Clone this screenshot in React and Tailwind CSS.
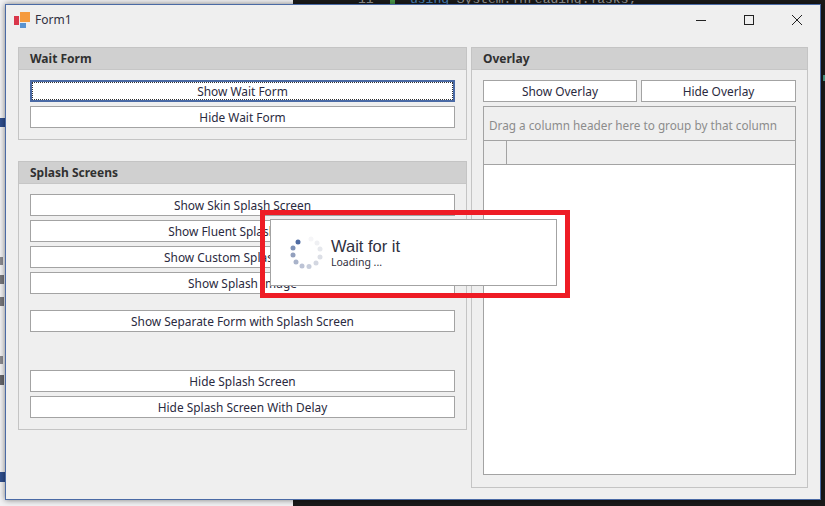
import React from "react";

const font = "font-['Noto_Sans','Liberation_Sans',sans-serif]";

const Btn = ({ label, focused, className = "" }) => (
  <div
    className={`flex h-[22px] items-center justify-center border bg-white pt-px text-[11.9px] text-[#2a2a40] ${
      focused ? "border-2 border-[#4a6aa5] outline-1 -outline-offset-3 outline-dotted outline-[#333]" : "border-[#a3a3a3]"
    } ${className}`}
  >
    {label}
  </div>
);

const GroupHead = ({ title }) => (
  <div className="flex h-[22px] items-center border-b border-[#c6c6c6] bg-[#d0d0d0] pl-[11px] pt-px text-[12px] font-bold text-[#303030]">
    {title}
  </div>
);

const Spinner = () => {
  const dots = [
    [298, 242, "#4f6ca3"],
    [293, 248, "#7e92b8"],
    [293, 255, "#929fbd"],
    [296, 262, "#a9b3ca"],
    [302, 266, "#bcc3d5"],
    [309, 266.5, "#c7cddb"],
    [316, 263, "#d3d7e1"],
    [320, 257, "#dcdfe6"],
    [320, 249, "#e6e8ed"],
    [317, 243, "#eff0f3"],
    [311, 239, "#f6f6f8"],
  ];
  return (
    <svg width="40" height="40" viewBox="286 233 40 40" className="shrink-0">
      {dots.map(([x, y, c], i) => (
        <circle key={i} cx={x} cy={y} r={2.5} fill={c} />
      ))}
    </svg>
  );
};

export default function App() {
  return (
    <div className={`relative h-[506px] w-[825px] overflow-hidden bg-[#1a1a1a] ${font}`}>
      {/* what is behind the form */}
      <div className="absolute left-0 top-0 h-[506px] w-[293px] bg-[#f2f2f4]" />
      <div className="absolute left-0 top-[118px] h-[9px] w-[5px] bg-[#2f4f8f]" />
      <div className="absolute left-0 top-[472px] h-[10px] w-[5px] bg-[#2f4f8f]" />
      <div className="absolute left-0 top-[257px] h-2 w-[3px] bg-[#8a8a90]" />
      <div className="absolute left-0 top-[275px] h-[9px] w-[4px] bg-[#77777c]" />
      <div className="absolute left-0 top-[297px] h-[9px] w-[4px] bg-[#77777c]" />
      <div className="absolute left-0 top-[356px] h-2 w-[3px] bg-[#8a8a90]" />
      <div className="absolute left-0 top-[375px] h-[10px] w-[4px] bg-[#66666b]" />
      <div className="absolute left-[390px] top-0 h-1 w-[5px] bg-[#4a9a4a]" />
      <div className="absolute left-[823px] top-[75px] h-[6px] w-[2px] bg-[#4a9a8a]" />
      <div className="absolute left-[358px] -top-[10px] whitespace-nowrap font-['Liberation_Mono',monospace] text-[13px] text-[#9a9a9a]">
        11
      </div>
      <div className="absolute left-[410px] -top-[10px] whitespace-nowrap font-['Liberation_Mono',monospace] text-[13px] text-[#9a9a9a]">
        <span className="text-[#4a86c0]">using</span> System.Threading.Tasks;
      </div>

      {/* form */}
      <div className="absolute left-[5px] top-[4px] flex h-[496px] w-[816px] flex-col border border-[#4a6aa5] bg-[#efefef] shadow-[0_0_6px_rgba(0,0,0,0.5)]">
        <div className="flex h-[30px] shrink-0 items-center pl-[8px] pr-[4px]">
          <svg width="16" height="16" viewBox="0 0 16 16" className="shrink-0">
            <rect x="0" y="4" width="5" height="9" fill="#d9364a" />
            <rect x="6" y="0" width="10" height="10" fill="#f59a3e" />
            <rect x="6" y="11" width="6" height="5" fill="#5a93d0" />
          </svg>
          <span className="ml-[5px] text-[12px] text-[#303040]">Form1</span>
          <div className="ml-auto flex items-center text-[#222]">
            <svg width="48" height="16" viewBox="0 0 48 16">
              <path d="M24 8.5h10" stroke="currentColor" fill="none" />
            </svg>
            <svg width="48" height="16" viewBox="0 0 48 16">
              <rect x="24.5" y="3.5" width="9" height="9" stroke="currentColor" fill="none" />
            </svg>
            <svg width="48" height="16" viewBox="0 0 48 16">
              <path d="M24 3l10 10M34 3L24 13" stroke="currentColor" fill="none" />
            </svg>
          </div>
        </div>

        <div className="flex pl-[12px] pt-[12px]">
          <div className="flex w-[449px] flex-col gap-[21px]">
            <section className="h-[93px] border border-[#c4c4c4]">
              <GroupHead title="Wait Form" />
              <div className="flex flex-col gap-1 px-[11px] pt-[10px]">
                <Btn label="Show Wait Form" focused />
                <Btn label="Hide Wait Form" />
              </div>
            </section>

            <section className="h-[269px] border border-[#c4c4c4]">
              <GroupHead title="Splash Screens" />
              <div className="flex flex-col gap-1 px-[11px] pt-[10px]">
                <Btn label="Show Skin Splash Screen" />
                <Btn label="Show Fluent Splash Screen" />
                <Btn label="Show Custom Splash Screen" />
                <Btn label="Show Splash Image" />
                <Btn label="Show Separate Form with Splash Screen" className="mt-3" />
                <Btn label="Hide Splash Screen" className="mt-[34px]" />
                <Btn label="Hide Splash Screen With Delay" />
              </div>
            </section>
          </div>

          <section className="ml-1 flex h-[441px] w-[337px] flex-col border border-[#c4c4c4]">
            <GroupHead title="Overlay" />
            <div className="flex min-h-0 flex-1 flex-col gap-1 px-[11px] pb-3 pt-[10px]">
              <div className="flex gap-1">
                <Btn label="Show Overlay" className="w-[154px]" />
                <Btn label="Hide Overlay" className="flex-1" />
              </div>
              <div className="flex min-h-0 flex-1 flex-col border border-[#a3a3a3] bg-white">
                <div className="flex h-[34px] shrink-0 items-center border-b border-[#a3a3a3] bg-[#efefef] pl-[5px] pt-1 text-[11.75px] text-[#8c8c8c]">
                  Drag a column header here to group by that column
                </div>
                <div className="flex h-[24px] shrink-0 border-b border-[#a3a3a3] bg-[#efefef]">
                  <div className="w-[23px] border-r border-[#a3a3a3]" />
                </div>
              </div>
            </div>
          </section>
        </div>
      </div>

      {/* wait form on top */}
      <div className="absolute left-[260px] top-[210px] h-[88px] w-[310px] border-[5px] border-[#ee1c25]">
        <div className="absolute left-[5px] top-[4px] flex h-[67px] w-[287px] items-center border border-[#a3a3a3] bg-white pl-[15px]">
          <Spinner />
          <div className="ml-[5px] flex flex-col">
            <span className="font-['Liberation_Sans',sans-serif] text-[16.5px] leading-[18px] text-[#303040]">Wait for it</span>
            <span className="text-[10.5px] leading-[14px] text-[#303040]">Loading ...</span>
          </div>
        </div>
      </div>
    </div>
  );
}
